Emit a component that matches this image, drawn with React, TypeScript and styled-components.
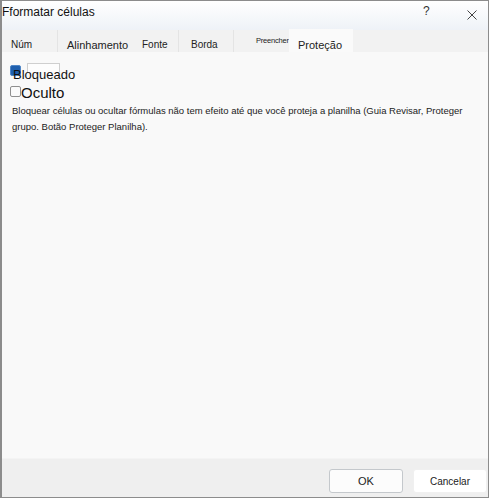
import styled, { createGlobalStyle } from 'styled-components';

const Global = createGlobalStyle`
  html, body {
    margin: 0;
    padding: 0;
    background: #ffffff;
  }
  * { box-sizing: border-box; }
`;

export default function App() {
  return (
    <>
      <Global />
      <Window>
        <TitleBar>
          <Title>Fformatar células</Title>
          <TitleButtons>
            <HelpButton>?</HelpButton>
            <CloseButton aria-label="Fechar">
              <svg width="10" height="10" viewBox="0 0 10 10">
                <path d="M0.5 0.5 L9.5 9.5 M9.5 0.5 L0.5 9.5" stroke="#444" strokeWidth="1" />
              </svg>
            </CloseButton>
          </TitleButtons>
        </TitleBar>

        <TabStrip>
          <Tab $w={56} $size={10}>Núm</Tab>
          <Tab $w={74} $size={11} $pad={9} $plain>Alinhamento</Tab>
          <Tab $w={47} $size={10} $pad={10}>Fonte</Tab>
          <Tab $w={55} $size={10} $pad={12}>Borda</Tab>
          <Tab $w={56} $size={7.5} $pad={22} $offset={-3} $tight $plain>Preencher</Tab>
          <ActiveTab>Proteção</ActiveTab>
        </TabStrip>

        <Content>
          <CheckRow>
            <CheckBox $checked />
            <FocusBox />
          </CheckRow>
          <OverLabel>Bloqueado</OverLabel>
          <CheckRow $top={2}>
            <CheckBox />
            <Label>Oculto</Label>
          </CheckRow>
          <Description>
            Bloquear células ou ocultar fórmulas não tem efeito até que você proteja a planilha (Guia Revisar, Proteger
            grupo. Botão Proteger Planilha).
          </Description>
        </Content>

        <Footer>
          <Button $primary>OK</Button>
          <Button>Cancelar</Button>
        </Footer>
      </Window>
    </>
  );
}

const Window = styled.div`
  width: 489px;
  height: 498px;
  border: 1px solid #8c8c8c;
  border-left-width: 2px;
  display: flex;
  flex-direction: column;
  font-family: "Liberation Sans", Arial, sans-serif;
  color: #1a1a1a;
  background: #f9f9f9;
`;

const TitleBar = styled.div`
  height: 29px;
  display: flex;
  align-items: flex-start;
  justify-content: space-between;
  background: linear-gradient(#ffffff, #eef2f7);
  padding: 4px 0 0 0;
`;

const Title = styled.div`
  font-size: 12px;
  color: #111;
  line-height: 14px;
`;

const TitleButtons = styled.div`
  display: flex;
  align-items: flex-start;
`;

const HelpButton = styled.div`
  font-size: 12px;
  color: #333;
  width: 44px;
  line-height: 12px;
`;

const CloseButton = styled.div`
  width: 21px;
  padding-top: 1px;
`;

const TabStrip = styled.div`
  height: 22px;
  display: flex;
  background: #f2f2f2;
`;

const Tab = styled.div<{ $w: number; $size: number; $pad?: number; $offset?: number; $tight?: boolean; $plain?: boolean }>`
  width: ${(p) => p.$w}px;
  padding-left: ${(p) => p.$pad ?? 9}px;
  padding-top: ${(p) => 9 + (p.$offset ?? 0)}px;
  font-size: ${(p) => p.$size}px;
  line-height: ${(p) => p.$size + 2}px;
  letter-spacing: ${(p) => (p.$tight ? '-0.2px' : 'normal')};
  white-space: nowrap;
  color: #222;
  border-right: 1px solid ${(p) => (p.$plain ? 'transparent' : '#e4e4e4')};
`;

const ActiveTab = styled.div`
  width: 64px;
  margin-top: -1px;
  margin-left: -1px;
  background: #fafafa;
  padding: 10px 0 0 9px;
  font-size: 11px;
  line-height: 13px;
  color: #222;
`;

const Content = styled.div`
  flex: 1;
  background: #f9f9f9;
  padding: 11px 8px 0 8px;
  display: flex;
  flex-direction: column;
`;

const CheckRow = styled.div<{ $top?: number }>`
  display: flex;
  align-items: flex-start;
  margin-top: ${(p) => p.$top ?? 0}px;
`;

const CheckBox = styled.div<{ $checked?: boolean }>`
  width: 11px;
  height: 11px;
  margin-top: 2px;
  border-radius: 2px;
  border: 1px solid ${(p) => (p.$checked ? '#4f86c6' : '#8f8f8f')};
  background: ${(p) => (p.$checked ? '#1f5fae' : '#fafafa')};
  flex-shrink: 0;
`;

const FocusBox = styled.div`
  width: 33px;
  height: 9px;
  margin-left: 6px;
  border: 1px solid #cfcfcf;
  border-bottom: none;
  background: #fdfdfd;
`;

const OverLabel = styled.div`
  font-size: 13px;
  line-height: 15px;
  margin: -9px 0 0 3px;
  color: #111;
  position: relative;
`;

const Label = styled.div`
  font-size: 15px;
  line-height: 17px;
  margin-left: 0;
  color: #111;
`;

const Description = styled.p`
  margin: 2px 0 0 2px;
  font-size: 9.5px;
  line-height: 16px;
  color: #222;
  width: 470px;
`;

const Footer = styled.div`
  height: 39px;
  background: #efefef;
  border-top: 1px solid #f4f4f4;
  display: flex;
  justify-content: flex-end;
  align-items: flex-start;
  gap: 10px;
  padding: 10px 1px 0 0;
`;

const Button = styled.div<{ $primary?: boolean }>`
  width: 74px;
  height: 24px;
  display: flex;
  align-items: center;
  justify-content: center;
  font-size: ${(p) => (p.$primary ? 11 : 10)}px;
  color: #222;
  background: ${(p) => (p.$primary ? '#fcfcfc' : '#ffffff')};
  border: 1px solid ${(p) => (p.$primary ? '#c4c8cc' : '#f0f0f0')};
  border-radius: 3px;
`;
